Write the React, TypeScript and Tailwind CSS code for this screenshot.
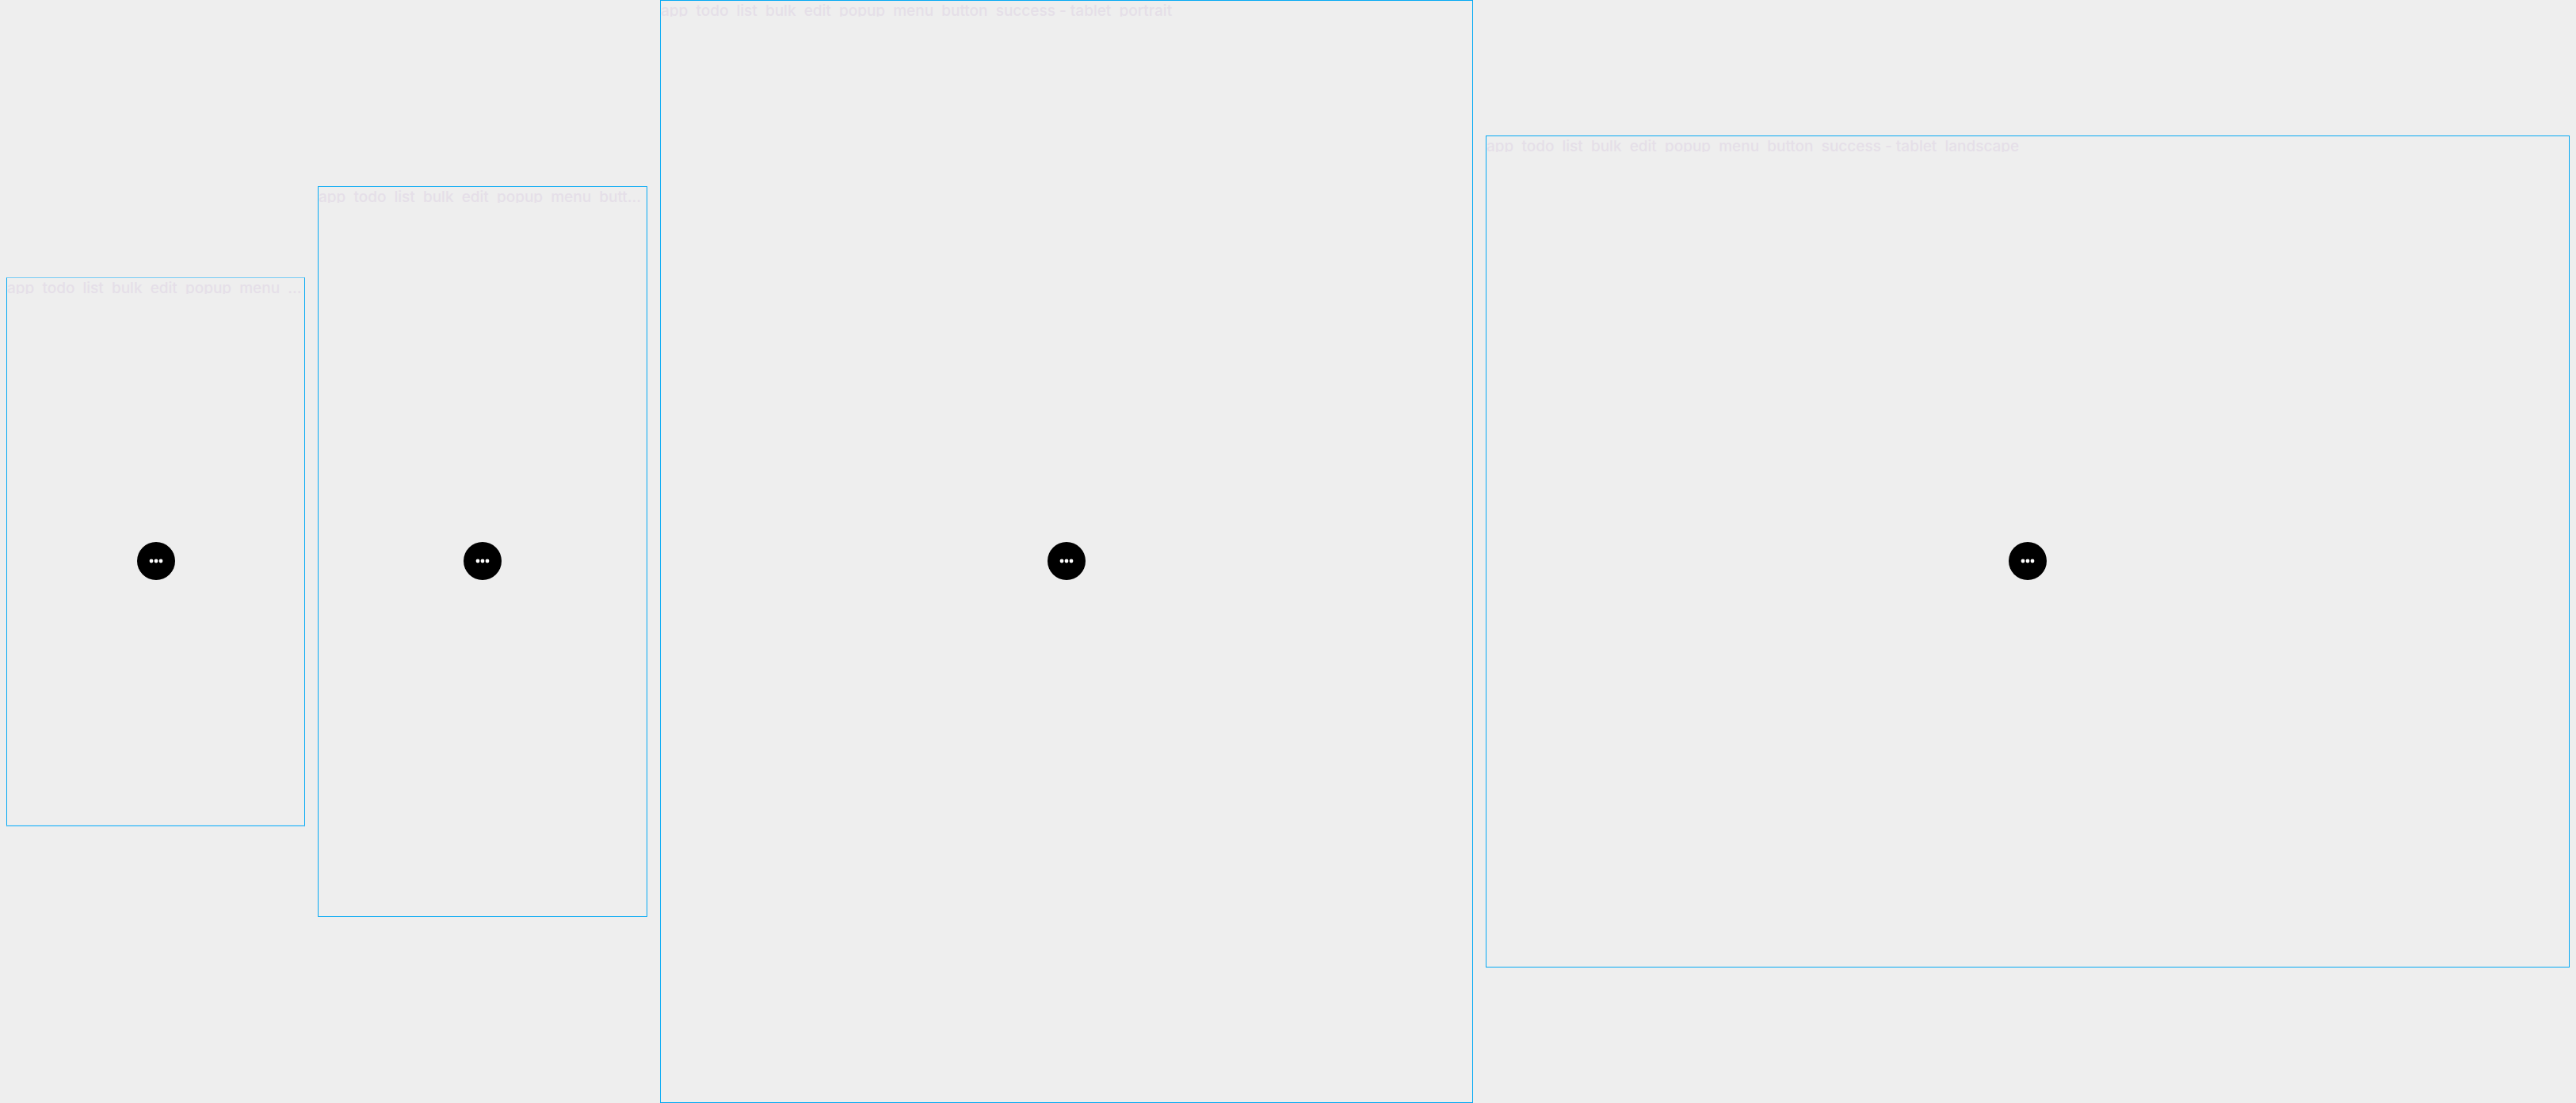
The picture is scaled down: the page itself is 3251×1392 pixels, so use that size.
type Artboard = { title: string; frame: string };

const artboards: Artboard[] = [
  {
    title: 'app  todo  list  bulk  edit  popup  menu  ...',
    frame: 'aspect-[377/693] border-t-[#74cbf5] border-b-2 border-b-[#74cbf5]',
  },
  {
    title: 'app  todo  list  bulk  edit  popup  menu  butt...',
    frame: 'aspect-[416/922]',
  },
  {
    title: 'app  todo  list  bulk  edit  popup  menu  button  success - tablet  portrait',
    frame: 'aspect-[1026/1392]',
  },
  {
    title: 'app  todo  list  bulk  edit  popup  menu  button  success - tablet  landscape',
    frame: 'aspect-[1368/1050]',
  },
];

function MenuButton() {
  return (
    <button
      type="button"
      aria-label="Open menu"
      className="flex size-12 items-center justify-center rounded-full bg-black text-white"
    >
      <svg viewBox="0 0 24 24" className="size-6" fill="currentColor" aria-hidden="true">
        <circle cx="6" cy="12" r="2.4" />
        <circle cx="12" cy="12" r="2.4" />
        <circle cx="18" cy="12" r="2.4" />
      </svg>
    </button>
  );
}

function Frame({ title, frame }: Artboard) {
  return (
    <section className={`flex min-w-0 flex-col border border-[#03a9f4] ${frame}`}>
      <h2 className="h-5 overflow-hidden whitespace-pre text-[19px]/[26px] font-medium text-[#e5dfe8]">
        {title}
      </h2>
      <div className="flex flex-1 items-center justify-center pt-1">
        <MenuButton />
      </div>
    </section>
  );
}

export default function App() {
  return (
    <main className="grid min-h-screen grid-cols-[377fr_416fr_1026fr_1368fr] items-center gap-4 bg-[#eeeeee] px-2 font-['Inter',sans-serif]">
      {artboards.map((board, index) => (
        <Frame key={index} {...board} />
      ))}
    </main>
  );
}
